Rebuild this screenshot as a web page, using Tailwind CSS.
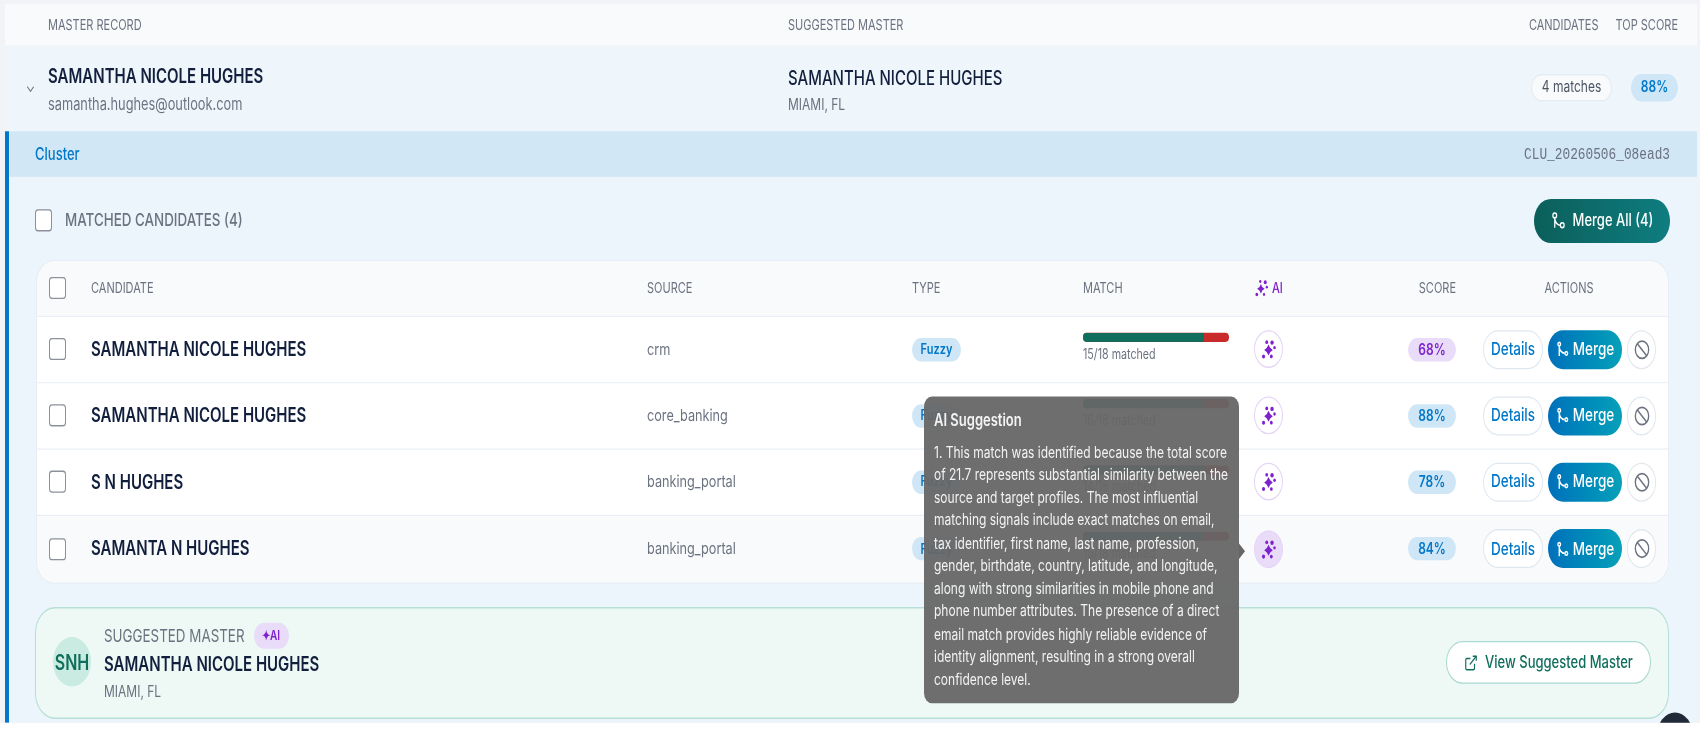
<!DOCTYPE html>
<html lang="en">
<head>
  <meta charset="UTF-8" />
  <meta name="viewport" content="width=device-width, initial-scale=1.0" />
  <title>Master Records</title>
  <script src="https://cdn.jsdelivr.net/npm/@tailwindcss/browser@4"></script>
</head>
<body class="bg-white h-[739px] overflow-hidden font-['Inter',sans-serif]">

  <!-- the capture is stretched vertically and soft, so the whole page is too -->
  <div class="relative w-[1700px] h-[556px] overflow-hidden origin-top scale-y-[1.3] blur-[0.4px] bg-[#f1f3f6] pt-[3px] pl-[5px] pr-[3px]">

    <!-- Column heads -->
    <div class="flex items-center h-[32px] bg-[#f9fafb] pl-[43px] pr-[19px] text-[11px] text-[#6b7280] uppercase">
      <div class="w-[740px]">Master Record</div>
      <div class="flex-1">Suggested Master</div>
      <div class="flex gap-[17px]"><span>Candidates</span><span>Top Score</span></div>
    </div>

    <!-- Master row -->
    <div class="flex items-center h-[66px] bg-[#eef6fc] pr-[19px]">
      <div class="w-[43px] pl-[20px]">
        <svg class="w-[11px] h-[11px] text-[#6b7280]" viewBox="0 0 24 24" fill="none" stroke="currentColor" stroke-width="2"><path d="m5 8 7 8 7-8"/></svg>
      </div>
      <div class="w-[740px] pt-[2px]">
        <div class="text-[15px] font-semibold text-[#111f3d]">SAMANTHA NICOLE HUGHES</div>
        <div class="text-[12.8px] text-[#6b7280]">samantha.hughes@outlook.com</div>
      </div>
      <div class="flex-1 pt-[1.5px]">
        <div class="text-[15px] font-medium text-[#111f3d]">SAMANTHA NICOLE HUGHES</div>
        <div class="text-xs text-[#6b7280] mt-[1.5px]">MIAMI, FL</div>
      </div>
      <div class="flex items-center gap-[19px] mb-[2px]">
        <span class="flex items-center justify-center w-[81px] h-[21px] rounded-full bg-[#f8fafc] border border-[#e3edf5] text-xs text-[#4b5563]">4 matches</span>
        <span class="flex items-center justify-center w-[47px] h-[21px] rounded-full bg-[#cfe6f7] text-xs font-semibold text-[#0077c8]">88%</span>
      </div>
    </div>

    <div class="border-l-[4px] border-[#0077c8] bg-[#ecf4fc] h-[455px]">
      <!-- Cluster bar -->
      <div class="flex items-center justify-between h-[35px] bg-[#d2e7f6] pl-[26px] pr-[27px]">
        <span class="text-[13px] font-medium text-[#0077c8]">Cluster</span>
        <span class="font-['Liberation_Mono',monospace] text-[12.8px] text-[#6b7280]">CLU_20260506_08ead3</span>
      </div>

      <div class="pl-[26px] pr-[27px]">
        <!-- Matched candidates head -->
        <div class="flex items-center justify-between h-[34px] mt-[16.5px]">
          <label class="flex items-center gap-[13px] text-[13.4px] font-medium text-[#6b7280]">
            <span class="w-[17px] h-[17px] rounded-[3px] bg-white border border-[#8b9099]"></span>
            MATCHED CANDIDATES (4)
          </label>
          <button class="flex items-center justify-center gap-[7px] w-[136px] h-[34px] rounded-full bg-linear-to-r from-[#0b5f5a] to-[#0f7d80] text-[13px] font-medium text-white">
            <svg class="w-[15px] h-[15px]" viewBox="0 0 24 24" fill="none" stroke="currentColor" stroke-width="2"><circle cx="18" cy="18" r="3"/><circle cx="6" cy="6" r="3"/><path d="M6 21V9a9 9 0 0 0 9 9"/></svg>
            Merge All (4)
          </button>
        </div>

        <!-- Candidates table -->
        <div class="mt-[13px] ml-[1px] rounded-[18px] overflow-hidden bg-white border border-[#e6edf4] w-[1633px]">
          <div class="grid grid-cols-[54px_556px_265px_171px_171px_86px_116px_212px] items-center h-[43px] bg-[#f9fafb] border-b border-[#e9eff5] text-[11px] text-[#6b7280] uppercase">
            <div class="pl-[12px]"><span class="block w-[17px] h-[17px] rounded-[3px] bg-white border border-[#8b9099]"></span></div>
            <div>Candidate</div>
            <div>Source</div>
            <div>Type</div>
            <div>Match</div>
            <div class="flex items-center gap-[3px] font-medium text-[#7e22ce]">
              <svg class="w-[15px] h-[15px]" viewBox="0 0 24 24" fill="currentColor"><path d="M11 7l2.200 3.800L17 13l-3.800 2.200L11 19l-2.200-3.800L5 13l3.800-2.200z"/><circle cx="18" cy="5" r="2.400"/><circle cx="20.500" cy="11" r="1.800"/><circle cx="10" cy="4" r="1.800"/><circle cx="4.500" cy="20" r="2.200"/><circle cx="16" cy="20" r="1.800"/></svg>
              AI
            </div>
            <div class="text-right">Score</div>
            <div class="pl-[27px] text-center pr-[13px]">Actions</div>
          </div>
          <div id="rows"></div>
        </div>

        <!-- Suggested master -->
        <div class="flex items-center justify-between h-[86px] mt-[18px] w-[1634px] rounded-[20px] bg-[#eef9f6] border border-[#b5dfd5] pl-[17px] pr-[17px]">
          <div class="flex items-center gap-[13px]">
            <div class="flex items-center justify-center w-[38px] h-[38px] rounded-full bg-[#c9ebe2] text-base font-semibold text-[#0f6e5c]">SNH</div>
            <div>
              <div class="flex items-center gap-[9px] text-[13.4px] text-[#6b7280]">
                SUGGESTED MASTER
                <span class="flex items-center justify-center w-[35px] h-[20px] rounded-full bg-[#e9dcf8] text-[10px] font-semibold text-[#7e22ce]">✦AI</span>
              </div>
              <div class="text-[15px] font-semibold text-[#111f3d] mt-[1px]">SAMANTHA NICOLE HUGHES</div>
              <div class="text-xs text-[#6b7280] mt-[2px]">MIAMI, FL</div>
            </div>
          </div>
          <button class="flex items-center justify-center gap-[7px] w-[205px] h-[33px] rounded-full bg-white border border-[#a9d9cf] text-[13px] font-medium text-[#0f6e5c]">
            <svg class="w-[14px] h-[14px]" viewBox="0 0 24 24" fill="none" stroke="currentColor" stroke-width="2"><path d="M15 3h6v6"/><path d="M10 14 21 3"/><path d="M18 13v6a2 2 0 0 1-2 2H5a2 2 0 0 1-2-2V8a2 2 0 0 1 2-2h6"/></svg>
            View Suggested Master
          </button>
        </div>
      </div>
    </div>

    <!-- AI suggestion tooltip -->
    <div class="absolute left-[924px] top-[305px] w-[315px] h-[236px] rounded-[8px] bg-[#666666]/95 px-[10px] pt-[8.5px] text-[#f3f3f3]">
      <div class="text-[13px] font-semibold">AI Suggestion</div>
      <p class="text-xs leading-[17.5px] mt-[5.5px]">1. This match was identified because the total score<br>of 21.7 represents substantial similarity between the<br>source and target profiles. The most influential<br>matching signals include exact matches on email,<br>tax identifier, first name, last name, profession,<br>gender, birthdate, country, latitude, and longitude,<br>along with strong similarities in mobile phone and<br>phone number attributes. The presence of a direct<br>email match provides highly reliable evidence of<br>identity alignment, resulting in a strong overall<br>confidence level.</p>
      <span class="absolute -right-[6px] top-[113px] w-0 h-0 border-y-[6px] border-y-transparent border-l-[6px] border-l-[#666666]"></span>
    </div>

    <!-- help button, cut off by the capture -->
    <div class="absolute left-[1657px] top-[548px] w-[36px] h-[36px] rounded-full bg-[#1f2937]"></div>
  </div>

  <script>
    const candidates = [
      { name: "SAMANTHA NICOLE HUGHES", source: "crm", matched: "15/18 matched", score: "68%", purple: true },
      { name: "SAMANTHA NICOLE HUGHES", source: "core_banking", matched: "16/18 matched", score: "88%" },
      { name: "S N HUGHES", source: "banking_portal", matched: "14/18 matched", score: "78%" },
      { name: "SAMANTA N HUGHES", source: "banking_portal", matched: "15/18 matched", score: "84%", hover: true }
    ];

    const mergeIcon = '<svg class="w-[13px] h-[13px]" viewBox="0 0 24 24" fill="none" stroke="currentColor" stroke-width="2.500"><circle cx="19" cy="18" r="2.500"/><circle cx="6" cy="5" r="2.500"/><path d="M6 22V8a10 10 0 0 0 10 10"/></svg>';
    const aiIcon = '<svg class="w-[17px] h-[17px]" viewBox="0 0 24 24" fill="currentColor"><path d="M12 7l2.400 3.600L18 13l-3.600 2.400L12 19l-2.400-3.600L6 13l3.600-2.400z"/><circle cx="17" cy="5" r="2.400"/><circle cx="9.500" cy="4.500" r="2"/><circle cx="20.500" cy="10.500" r="1.800"/><circle cx="5" cy="20" r="2.200"/><circle cx="16" cy="20" r="2"/></svg>';

    document.getElementById("rows").innerHTML = candidates.map((c, i) => `
      <div class="grid grid-cols-[54px_556px_265px_171px_171px_86px_116px_212px] items-center h-[51px] ${i < 3 ? "border-b border-[#e9eff5]" : ""} ${c.hover ? "bg-[#f9fafb]" : "bg-white"}">
        <div class="pl-[12px]"><span class="block w-[17px] h-[17px] rounded-[3px] bg-white border border-[#8b9099]"></span></div>
        <div class="pt-[1px] text-[15px] font-semibold text-[#111f3d]">${c.name}</div>
        <div class="text-[12.7px] text-[#6b7280]">${c.source}</div>
        <div><span class="flex items-center justify-center w-[49px] h-[18px] rounded-full bg-[#cfe6f7] text-[11px] font-semibold text-[#0077c8]">Fuzzy</span></div>
        <div>
          <div class="flex w-[146px] h-[7px] rounded-full overflow-hidden bg-[#c92a2a]"><div class="h-full bg-[#0f6e5c]" style="width:83%"></div></div>
          <div class="text-[10.7px] text-[#6b7280] mt-[2px]">${c.matched}</div>
        </div>
        <div>
          <span class="flex items-center justify-center w-[29px] h-[29px] rounded-full border border-[#e5d5f7] ${c.hover ? "bg-[#e9dcf8]" : "bg-white"} text-[#7e22ce]">${aiIcon}</span>
        </div>
        <div class="flex justify-end"><span class="flex items-center justify-center w-[48px] h-[18px] rounded-full ${c.purple ? "bg-[#e9dcf8] text-[#7e22ce]" : "bg-[#cfe6f7] text-[#0077c8]"} text-xs font-semibold">${c.score}</span></div>
        <div class="flex items-center gap-[5px] pl-[27px]">
          <button class="w-[60px] h-[30px] rounded-full bg-white border border-[#dfe8f0] text-[13.5px] font-medium text-[#0077c8]">Details</button>
          <button class="flex items-center justify-center gap-[4px] w-[74px] h-[30px] rounded-full bg-linear-to-r from-[#0070bb] to-[#0aa0b8] text-[13.5px] font-medium text-white">${mergeIcon}Merge</button>
          <button class="flex items-center justify-center w-[29px] h-[30px] rounded-full bg-white border border-[#e3e8ee] text-[#6b7280]">
            <svg class="w-[16px] h-[16px]" viewBox="0 0 24 24" fill="none" stroke="currentColor" stroke-width="2"><circle cx="12" cy="12" r="10"/><path d="m4.900 4.900 14.200 14.200"/></svg>
          </button>
        </div>
      </div>`).join("");
  </script>

</body>
</html>
